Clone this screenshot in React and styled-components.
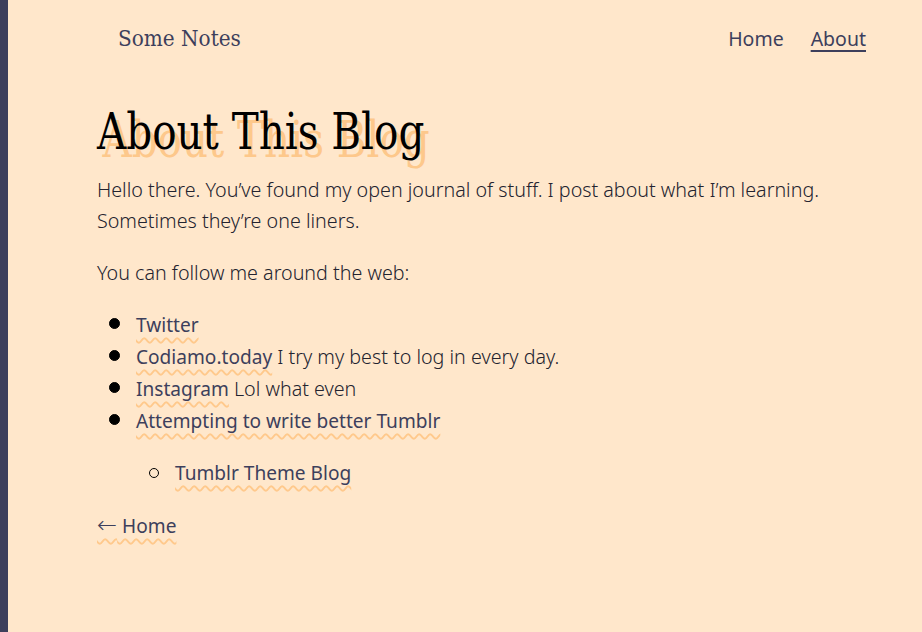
import styled, { createGlobalStyle } from "styled-components";

const GlobalStyle = createGlobalStyle`
  html, body {
    margin: 0;
    padding: 0;
    background: #ffe7cb;
  }
  body {
    min-height: 100vh;
    border-left: 8px solid #3d3f5c;
    box-sizing: border-box;
    font-family: "Noto Sans", "Open Sans", sans-serif;
    font-weight: 300;
    color: #23232f;
  }
`;

const Header = styled.header`
  display: flex;
  justify-content: space-between;
  align-items: center;
  padding: 20px 56px 0 110px;
  height: 36px;
`;

const SiteTitle = styled.a`
  font-family: "DejaVu Serif Condensed", "DejaVu Serif", serif;
  font-size: 22.3px;
  color: #3d3f5c;
  text-decoration: none;
`;

const Nav = styled.nav`
  display: flex;
  gap: 27px;
`;

const NavLink = styled.a`
  font-family: "Noto Sans", "Open Sans", sans-serif;
  font-weight: 400;
  font-size: 19.5px;
  color: #3d3f5c;
  text-decoration: ${(p) => (p.$active ? "underline" : "none")};
  text-decoration-thickness: 2px;
  text-underline-offset: 4px;
`;

const Main = styled.main`
  padding: 0 0 0 89px;
`;

const Title = styled.h1`
  font-family: "DejaVu Serif Condensed", "DejaVu Serif", serif;
  font-weight: 400;
  font-size: 50px;
  color: #000;
  margin: 46px 0 12px;
  line-height: 1.2;
  text-shadow: 6px 8px 0 #fdc88b;
  transform: scaleX(0.9);
  transform-origin: left center;
`;

const Para = styled.p`
  font-size: 19.7px;
  line-height: 31px;
  margin: 0 0 21px;
`;

const List = styled.ul`
  font-size: 19.7px;
  line-height: 31px;
  margin: 0 0 21px;
  padding-left: 39px;
  list-style: none;
`;

const SubList = styled(List)`
  margin: 20px 0 0;
`;

const Item = styled.li`
  position: relative;

  &::before {
    content: "";
    position: absolute;
    box-sizing: border-box;
    left: ${(p) => (p.$nested ? "-26px" : "-27px")};
    top: ${(p) => (p.$nested ? "11px" : "9px")};
    width: ${(p) => (p.$nested ? "10px" : "11px")};
    height: ${(p) => (p.$nested ? "10px" : "11px")};
    border-radius: 50%;
    background: ${(p) => (p.$nested ? "transparent" : "#000")};
    border: 1.5px solid #000;
  }
`;

const Link = styled.a`
  font-weight: 400;
  font-size: 19.1px;
  color: #3d3f5c;
  text-decoration: underline wavy #ffc98c;
  text-decoration-thickness: 1.5px;
  text-underline-offset: 5px;
`;

const Arrow = styled.span`
  font-family: "DejaVu Sans", sans-serif;
  font-weight: 200;
  font-size: 24px;
  line-height: 1;
`;

export default function App() {
  return (
    <>
      <GlobalStyle />
      <Header>
        <SiteTitle href="#">Some Notes</SiteTitle>
        <Nav>
          <NavLink href="#">Home</NavLink>
          <NavLink href="#" $active>About</NavLink>
        </Nav>
      </Header>
      <Main>
        <Title>About This Blog</Title>
        <Para>
          Hello there. You’ve found my open journal of stuff. I post about what I’m learning.
          Sometimes they’re one liners.
        </Para>
        <Para>You can follow me around the web:</Para>
        <List>
          <Item><Link href="#">Twitter</Link></Item>
          <Item><Link href="#">Codiamo.today</Link> I try my best to log in every day.</Item>
          <Item><Link href="#">Instagram</Link> Lol what even</Item>
          <Item>
            <Link href="#">Attempting to write better Tumblr</Link>
            <SubList>
              <Item $nested><Link href="#">Tumblr Theme Blog</Link></Item>
            </SubList>
          </Item>
        </List>
        <Para>
          <Link href="#"><Arrow>←</Arrow> Home</Link>
        </Para>
      </Main>
    </>
  );
}
